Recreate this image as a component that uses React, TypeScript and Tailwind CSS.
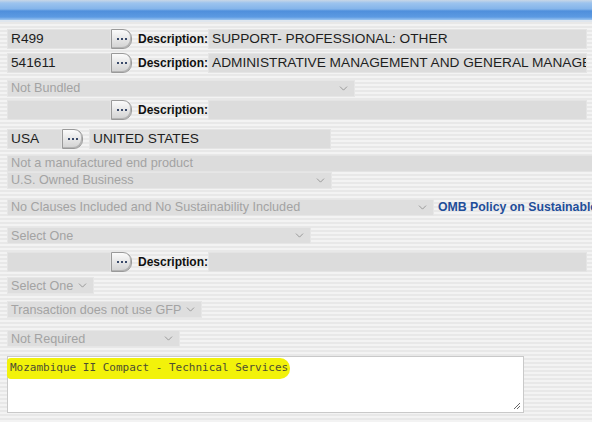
import React from 'react';
import { ChevronDown } from 'lucide-react';

const font = "font-['Liberation_Sans',Arial,sans-serif]";

const Lookup: React.FC = () => (
  <div className="flex h-[20px] w-[21px] shrink-0 items-center justify-center rounded-r-[9px] border border-[#9a9a9a] bg-gradient-to-b from-[#fbfbfb] to-[#d2d2d2] shadow-[inset_-1px_-1px_0_#b4b4b4]">
    <span className="flex gap-[2px]">
      <span className="h-[2px] w-[2px] bg-[#3a4a6a]" />
      <span className="h-[2px] w-[2px] bg-[#3a4a6a]" />
      <span className="h-[2px] w-[2px] bg-[#3a4a6a]" />
    </span>
  </div>
);

const Field: React.FC<{ value?: string; w: string; h?: string; muted?: boolean }> = ({ value = '', w, h = 'h-[20px]', muted }) => (
  <div className={`${w} ${h} flex shrink-0 items-center overflow-hidden whitespace-nowrap border border-[#e4e4e4] bg-[#dcdcdc] px-[3px] ${muted ? 'text-[12.7px] text-[#a3a3a3]' : 'text-[13.7px] text-[#1e1e1e]'}`}>
    {value}
  </div>
);

const Select: React.FC<{ value: string; w: string }> = ({ value, w }) => (
  <div className={`${w} flex h-[17px] shrink-0 items-center justify-between border border-[#e6e6e6] bg-[#dedede] pl-[3px] pr-[4px] text-[12.6px] text-[#a3a3a3]`}>
    <span className="whitespace-nowrap">{value}</span>
    <ChevronDown size={13} strokeWidth={1.5} className="text-[#8a8a8a]" />
  </div>
);

const DescRow: React.FC<{ code?: string; desc?: string; mt: string }> = ({ code, desc, mt }) => (
  <div className={`${mt} flex items-center`}>
    <Field value={code} w="w-[104px]" />
    <Lookup />
    <span className="ml-[6px] w-[70px] text-[12px] font-bold text-[#111]">Description:</span>
    <Field value={desc} w="w-[379px]" />
  </div>
);

export default function App() {
  return (
    <div className={`${font} h-[422px] w-[592px] overflow-hidden bg-[repeating-linear-gradient(to_bottom,#f3f3f3_0px,#f3f3f3_2px,#e8e8e8_2px,#e8e8e8_4px)]`}>
      <div className="h-[22px] border-b-2 border-[#dfe6ee] bg-[linear-gradient(to_bottom,#c9d7e6_0px,#9cc3ee_3px,#84b4ea_9px,#4f8fdc_11px,#5c9ae2_17px,#9cc5f0_20px)]" />
      <div className="flex flex-col pl-[7px]">
        <DescRow code="R499" desc="SUPPORT- PROFESSIONAL: OTHER" mt="mt-[7px]" />
        <DescRow code="541611" desc="ADMINISTRATIVE MANAGEMENT AND GENERAL MANAGEMENT CONSULTING SERVICES" mt="mt-[4px]" />
        <div className="mt-[7px]">
          <Select value="Not Bundled" w="w-[348px]" />
        </div>
        <DescRow mt="mt-[3px]" />
        <div className="mt-[9px] flex items-center">
          <Field value="USA" w="w-[55px]" />
          <Lookup />
          <div className="ml-[6px]">
            <Field value="UNITED STATES" w="w-[242px]" />
          </div>
        </div>
        <div className="mt-[6px]">
          <Field value="Not a manufactured end product" w="w-[600px]" h="h-[17px]" muted />
        </div>
        <div>
          <Select value="U.S. Owned Business" w="w-[325px]" />
        </div>
        <div className="mt-[9px] flex items-center">
          <Select value="No Clauses Included and No Sustainability Included" w="w-[427px]" />
          <span className="ml-[4px] whitespace-nowrap text-[12.3px] font-bold text-[#1f4e9a]">OMB Policy on Sustainable Acquisition</span>
        </div>
        <div className="mt-[11px]">
          <Select value="Select One" w="w-[304px]" />
        </div>
        <DescRow mt="mt-[8px]" />
        <div className="mt-[5px]">
          <Select value="Select One" w="w-[87px]" />
        </div>
        <div className="mt-[7px]">
          <Select value="Transaction does not use GFP" w="w-[195px]" />
        </div>
        <div className="mt-[12px]">
          <Select value="Not Required" w="w-[173px]" />
        </div>
        <div className="relative mt-[9px] h-[57px] w-[517px] border border-[#c9c9c9] bg-white">
          <div className="absolute -left-[1px] top-[1px] h-[21px] w-[283px] rounded-r-[10px] rounded-l-[4px] bg-[#f2f20a]" />
          <span className="relative ml-[2px] mt-[3px] block font-['DejaVu_Sans_Mono',monospace] text-[11px] leading-[16px] text-[#4e4e32]">
            Mozambique II Compact - Technical Services
          </span>
          <svg className="absolute bottom-[2px] right-[2px]" width="8" height="8" viewBox="0 0 8 8">
            <path d="M7 1 L1 7 M7 4 L4 7" stroke="#666" strokeWidth="1" />
          </svg>
        </div>
      </div>
    </div>
  );
}
